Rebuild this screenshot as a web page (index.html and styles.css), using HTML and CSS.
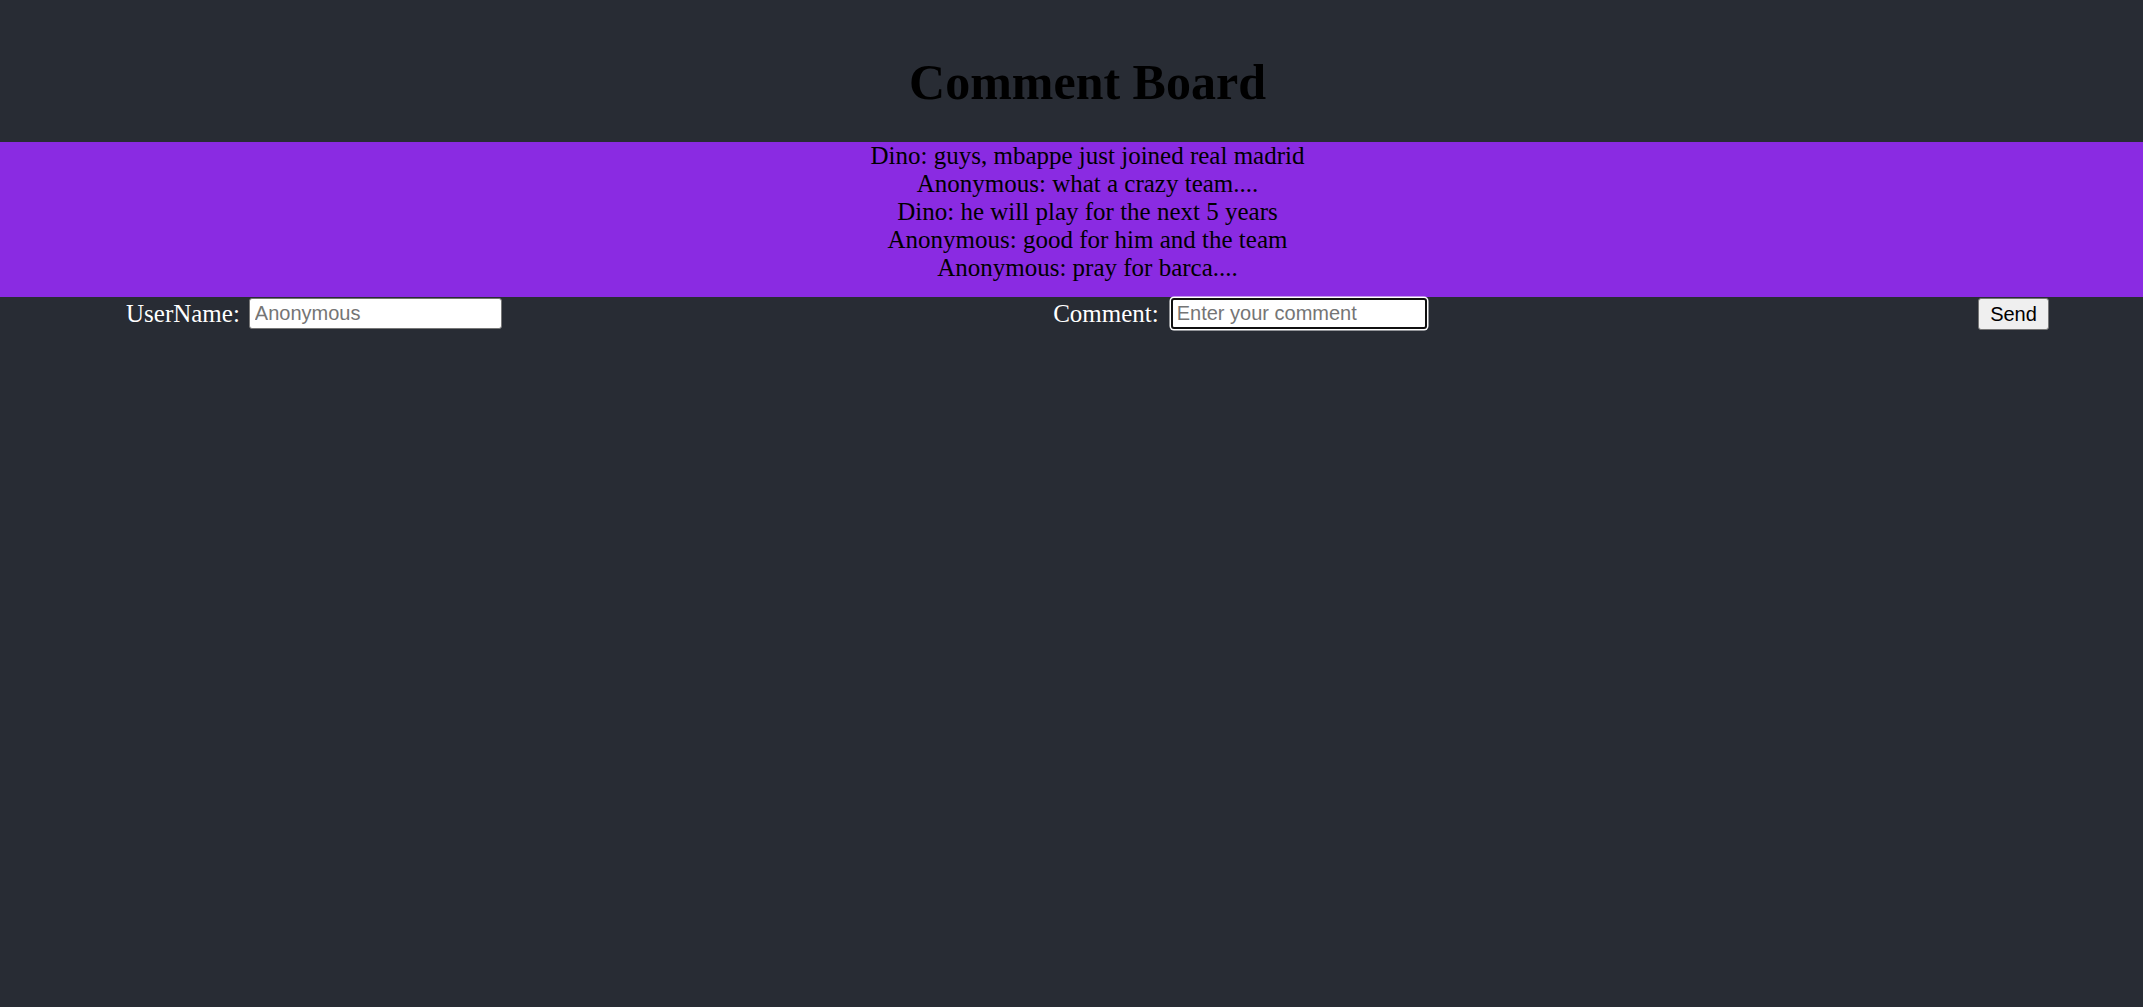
FILE: index.html
```html
<!DOCTYPE html>
<html>
<head>
<meta charset="utf-8">
<link rel="stylesheet" href="styles.css">
</head>
<body>
<div class="app">
  <h1 class="title">Comment Board</h1>
  <div class="board">
    <div class="msg">Dino: guys, mbappe just joined real madrid</div>
    <div class="msg">Anonymous: what a crazy team....</div>
    <div class="msg">Dino: he will play for the next 5 years</div>
    <div class="msg">Anonymous: good for him and the team</div>
    <div class="msg">Anonymous: pray for barca....</div>
  </div>
  <div class="form">
    <div class="field">
      <label class="label">UserName:</label>
      <input class="input" type="text" placeholder="Anonymous">
    </div>
    <div class="field">
      <label class="label">Comment:</label>
      <input class="input focused" type="text" placeholder="Enter your comment">
    </div>
    <button class="send">Send</button>
  </div>
</div>
</body>
</html>
```
FILE: styles.css
```css
html, body {
  margin: 0;
  padding: 0;
  background: #282c34;
  height: 100%;
}
.app {
  font-family: "Liberation Serif", "Times New Roman", serif;
  padding-top: 54px;
}
.title {
  margin: 0 0 32px 0;
  padding-left: 32px;
  font-size: 50px;
  line-height: 56px;
  font-weight: bold;
  color: #000;
  text-align: center;
}
.board {
  background: #8a2be2;
  color: #000;
  text-align: center;
  font-size: 25px;
  line-height: 28px;
  padding: 0 0 15px 32px;
}
.form {
  display: flex;
  justify-content: space-between;
  align-items: flex-start;
  padding: 1px 94px 0 126px;
}
.field {
  display: flex;
  align-items: center;
  gap: 9px;
}
.label {
  color: #fff;
  font-size: 25px;
  line-height: 31px;
}
.input {
  box-sizing: border-box;
  width: 253px;
  height: 31px;
  margin: 0;
  padding: 1px 5px;
  border: 1px solid #767676;
  border-radius: 3px;
  background: #fff;
  font-family: "Liberation Sans", Arial, sans-serif;
  font-size: 20px;
  color: #000;
}
.input::placeholder {
  color: #757575;
}
.focused {
  border: 2px solid #101010;
  box-shadow: 0 0 0 1.5px #fff;
  padding: 0 4px;
  width: 256px;
  height: 31px;
  margin-left: 3px;
}
.send {
  box-sizing: border-box;
  width: 71px;
  height: 32px;
  margin: 0;
  padding: 0;
  border: 1px solid #767676;
  border-radius: 3px;
  background: #efefef;
  color: #000;
  font-family: "Liberation Sans", Arial, sans-serif;
  font-size: 20px;
}
```
